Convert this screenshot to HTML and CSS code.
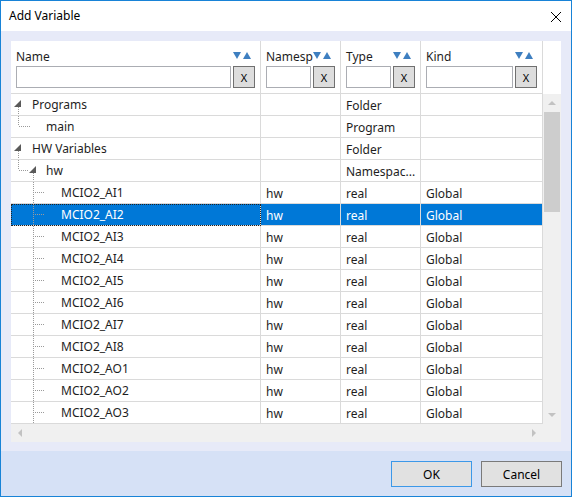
FILE: index.html
```html
<!DOCTYPE html>
<html lang="en">
<head>
    <meta charset="UTF-8">
    <title>Add Variable</title>
    <link rel="stylesheet" href="styles.css">
</head>
<body>

<div class="window">
    <!-- Başlık -->
    <div class="titlebar">
        <span class="title">Add Variable</span>
        <svg class="close" width="10" height="10" viewBox="0 0 10 10"><path d="M0 0L10 10M10 0L0 10"></path></svg>
    </div>

    <div class="content">
        <div class="grid">
            <div class="head">
                <div class="hcell">
                    <div class="htitle"><span>Name</span><svg class="sort" width="19" height="8" viewBox="0 0 19 8"><polygon points="0,0 8,0 4,7"></polygon><polygon points="10,7 18,7 14,0"></polygon></svg></div>
                    <div class="filter"><span class="box"></span><span class="xbtn">X</span></div>
                </div>
                <div class="hcell">
                    <div class="htitle"><span>Namesp</span><svg class="sort" width="19" height="8" viewBox="0 0 19 8"><polygon points="0,0 8,0 4,7"></polygon><polygon points="10,7 18,7 14,0"></polygon></svg></div>
                    <div class="filter"><span class="box"></span><span class="xbtn">X</span></div>
                </div>
                <div class="hcell">
                    <div class="htitle"><span>Type</span><svg class="sort" width="19" height="8" viewBox="0 0 19 8"><polygon points="0,0 8,0 4,7"></polygon><polygon points="10,7 18,7 14,0"></polygon></svg></div>
                    <div class="filter"><span class="box"></span><span class="xbtn">X</span></div>
                </div>
                <div class="hcell">
                    <div class="htitle"><span>Kind</span><svg class="sort" width="19" height="8" viewBox="0 0 19 8"><polygon points="0,0 8,0 4,7"></polygon><polygon points="10,7 18,7 14,0"></polygon></svg></div>
                    <div class="filter"><span class="box"></span><span class="xbtn">X</span></div>
                </div>
                <div class="hblank"></div>
            </div>

            <div class="body">
                <div class="rows">
                    <div class="row">
                        <div class="cell name"><svg class="tree" width="21" height="21" viewBox="0 0 21 21"><polygon class="exp" points="3,13 10,13 10,6"></polygon><path d="M7.5 13V21"></path></svg>Programs</div>
                        <div class="cell"></div><div class="cell">Folder</div><div class="cell"></div>
                    </div>
                    <div class="row">
                        <div class="cell name"><svg class="tree" width="35" height="21" viewBox="0 0 35 21"><path d="M7.5 0V10M8 10.5H20"></path></svg>main</div>
                        <div class="cell"></div><div class="cell">Program</div><div class="cell"></div>
                    </div>
                    <div class="row">
                        <div class="cell name"><svg class="tree" width="21" height="21" viewBox="0 0 21 21"><polygon class="exp" points="3,13 10,13 10,6"></polygon><path d="M7.5 13V21"></path></svg>HW Variables</div>
                        <div class="cell"></div><div class="cell">Folder</div><div class="cell"></div>
                    </div>
                    <div class="row">
                        <div class="cell name"><svg class="tree" width="35" height="21" viewBox="0 0 35 21"><path d="M7.5 0V10M8 10.5H18M22.5 13V21"></path><polygon class="exp" points="18,13 25,13 25,6"></polygon></svg>hw</div>
                        <div class="cell"></div><div class="cell">Namespac...</div><div class="cell"></div>
                    </div>
                    <div class="row">
                        <div class="cell name"><svg class="tree" width="50" height="21" viewBox="0 0 50 21"><path d="M22.5 0V21M24 10.5H33"></path></svg>MCIO2_AI1</div>
                        <div class="cell">hw</div><div class="cell">real</div><div class="cell">Global</div>
                    </div>
                    <div class="row selected">
                        <div class="cell name"><svg class="tree" width="50" height="21" viewBox="0 0 50 21"><path d="M22.5 0V21M24 10.5H33"></path></svg>MCIO2_AI2</div>
                        <div class="cell">hw</div><div class="cell">real</div><div class="cell">Global</div>
                    </div>
                    <div class="row">
                        <div class="cell name"><svg class="tree" width="50" height="21" viewBox="0 0 50 21"><path d="M22.5 0V21M24 10.5H33"></path></svg>MCIO2_AI3</div>
                        <div class="cell">hw</div><div class="cell">real</div><div class="cell">Global</div>
                    </div>
                    <div class="row">
                        <div class="cell name"><svg class="tree" width="50" height="21" viewBox="0 0 50 21"><path d="M22.5 0V21M24 10.5H33"></path></svg>MCIO2_AI4</div>
                        <div class="cell">hw</div><div class="cell">real</div><div class="cell">Global</div>
                    </div>
                    <div class="row">
                        <div class="cell name"><svg class="tree" width="50" height="21" viewBox="0 0 50 21"><path d="M22.5 0V21M24 10.5H33"></path></svg>MCIO2_AI5</div>
                        <div class="cell">hw</div><div class="cell">real</div><div class="cell">Global</div>
                    </div>
                    <div class="row">
                        <div class="cell name"><svg class="tree" width="50" height="21" viewBox="0 0 50 21"><path d="M22.5 0V21M24 10.5H33"></path></svg>MCIO2_AI6</div>
                        <div class="cell">hw</div><div class="cell">real</div><div class="cell">Global</div>
                    </div>
                    <div class="row">
                        <div class="cell name"><svg class="tree" width="50" height="21" viewBox="0 0 50 21"><path d="M22.5 0V21M24 10.5H33"></path></svg>MCIO2_AI7</div>
                        <div class="cell">hw</div><div class="cell">real</div><div class="cell">Global</div>
                    </div>
                    <div class="row">
                        <div class="cell name"><svg class="tree" width="50" height="21" viewBox="0 0 50 21"><path d="M22.5 0V21M24 10.5H33"></path></svg>MCIO2_AI8</div>
                        <div class="cell">hw</div><div class="cell">real</div><div class="cell">Global</div>
                    </div>
                    <div class="row">
                        <div class="cell name"><svg class="tree" width="50" height="21" viewBox="0 0 50 21"><path d="M22.5 0V21M24 10.5H33"></path></svg>MCIO2_AO1</div>
                        <div class="cell">hw</div><div class="cell">real</div><div class="cell">Global</div>
                    </div>
                    <div class="row">
                        <div class="cell name"><svg class="tree" width="50" height="21" viewBox="0 0 50 21"><path d="M22.5 0V21M24 10.5H33"></path></svg>MCIO2_AO2</div>
                        <div class="cell">hw</div><div class="cell">real</div><div class="cell">Global</div>
                    </div>
                    <div class="row">
                        <div class="cell name"><svg class="tree" width="50" height="21" viewBox="0 0 50 21"><path d="M22.5 0V21M24 10.5H33"></path></svg>MCIO2_AO3</div>
                        <div class="cell">hw</div><div class="cell">real</div><div class="cell">Global</div>
                    </div>
                </div>
                <!-- Dikey kaydırma çubuğu -->
                <div class="vscroll">
                    <svg class="arrow" width="8" height="4" viewBox="0 0 8 4"><polygon points="0,4 8,4 4,0"></polygon></svg>
                    <div class="thumb"></div>
                    <div class="spacer"></div>
                    <svg class="arrow" width="8" height="4" viewBox="0 0 8 4"><polygon points="0,0 8,0 4,4"></polygon></svg>
                </div>
            </div>

            <!-- Yatay kaydırma çubuğu -->
            <div class="hscroll">
                <div class="htrack">
                    <svg width="4" height="8" viewBox="0 0 4 8"><polygon points="4,0 4,8 0,4"></polygon></svg>
                    <svg width="4" height="8" viewBox="0 0 4 8"><polygon points="0,0 0,8 4,4"></polygon></svg>
                </div>
                <div class="corner"></div>
            </div>
        </div>
    </div>

    <div class="footer">
        <button class="btn default">OK</button>
        <button class="btn">Cancel</button>
    </div>
</div>

</body>
</html>
```

FILE: styles.css
```css
body {
    margin: 0;
    font-family: "Noto Sans", "Open Sans", sans-serif;
    font-size: 12px;
    color: #1e1e1e;
}
.window {
    width: 570px;
    height: 495px;
    border: 1px solid #1883d7;
    display: flex;
    flex-direction: column;
    background: #e7eaf8;
}
.titlebar {
    height: 30px;
    background: #fff;
    display: flex;
    align-items: center;
    justify-content: space-between;
    padding: 0 10px 0 8px;
}
.title {
    color: #000;
    margin-top: -1px;
}
.close {
    stroke: #000;
    stroke-width: 1;
    margin-top: 1px;
}
.content {
    height: 420px;
    padding: 10px 10px 0 10px;
    box-sizing: border-box;
}
.grid {
    width: 550px;
    background: #fff;
}
.head {
    display: grid;
    grid-template-columns: 250px 80px 80px 122px 18px;
}
.hcell {
    border-right: 1px solid #dadada;
    border-bottom: 1px solid #dadada;
    padding: 6px 5px 5px 5px;
    display: flex;
    flex-direction: column;
    gap: 1px;
}
.htitle {
    height: 18px;
    display: flex;
    align-items: center;
    justify-content: space-between;
    color: #1e1e1e;
}
.sort {
    fill: #3e7fc0;
    margin-right: 3px;
}
.filter {
    display: flex;
    gap: 2px;
    height: 22px;
}
.box {
    flex: 1;
    border: 1px solid #abadb3;
    background: #fff;
}
.xbtn {
    width: 20px;
    border: 1px solid #707070;
    background: #dddddd;
    color: #000;
    font-size: 11px;
    display: flex;
    align-items: center;
    justify-content: center;
}
.body {
    display: flex;
    height: 330px;
}
.rows {
    width: 532px;
    overflow: hidden;
}
.row {
    display: grid;
    grid-template-columns: 250px 80px 80px 122px;
    height: 22px;
}
.cell {
    border-right: 1px solid #dadada;
    border-bottom: 1px solid #dadada;
    padding: 2px 0 0 5px;
    display: flex;
    align-items: center;
    white-space: nowrap;
}
.cell.name {
    padding: 0;
}
.tree {
    flex: none;
    fill: none;
    stroke: #9a9a9a;
    stroke-width: 1;
    stroke-dasharray: 1 1;
}
.tree .exp {
    fill: #5a5a5a;
    stroke: none;
}
.row.selected .cell {
    background: #0078d7;
    color: #fff;
}
.row.selected .cell.name {
    outline: 1px dotted #222;
    outline-offset: -1px;
}
.vscroll {
    width: 18px;
    background: #f0f0f0;
    display: flex;
    flex-direction: column;
    align-items: center;
    padding: 0 0 0 0;
}
.vscroll .arrow {
    fill: #c2c2c2;
    margin: 7px 0;
}
.thumb {
    width: 16px;
    height: 100px;
    background: #cdcdcd;
}
.spacer {
    flex: 1;
}
.hscroll {
    display: flex;
    height: 18px;
    background: #f0f0f0;
}
.htrack {
    flex: 1;
    display: flex;
    align-items: center;
    justify-content: space-between;
    padding: 0 7px;
    fill: #c2c2c2;
}
.corner {
    width: 18px;
}
.footer {
    flex: 1;
    background: #d6e1f6;
    display: flex;
    justify-content: flex-end;
    align-items: flex-start;
    gap: 9px;
    padding: 10px 9px 0 0;
}
.btn {
    width: 81px;
    height: 26px;
    font-family: inherit;
    font-size: 12px;
    color: #000;
    background: #e1e1e1;
    border: 1px solid #7a7a7a;
    padding: 0;
}
.btn.default {
    border-color: #3c98e8;
}
```
